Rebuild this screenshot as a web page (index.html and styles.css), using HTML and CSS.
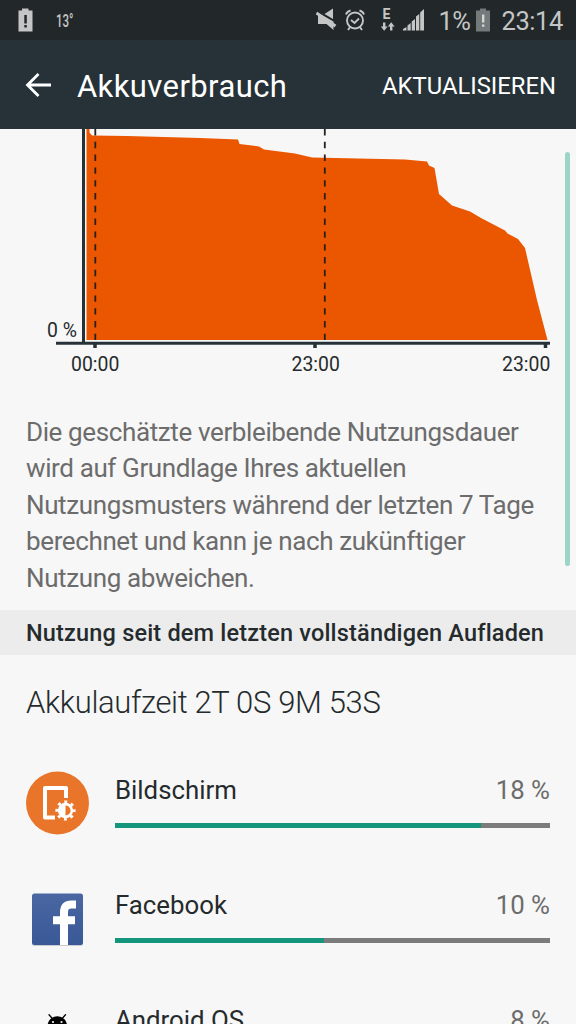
FILE: index.html
```html
<!DOCTYPE html>
<html lang="de">
<head>
    <title>Akkuverbrauch</title>
    <meta charset="utf-8"/>
    <link rel="stylesheet" href="styles.css">
</head>
<body>
    <div class="statusbar">
        <svg class="battery-low" width="16" height="24" viewBox="0 0 16 24">
            <path fill="#c4c6c6" d="M.5 2.500h3.500V.5h6.500v2H14.500V23.500H.5z"/>
            <path fill="#222829" d="M6.300 7h2.500v8.500h-2.500zM6.300 17h2.500v2.500h-2.500z"/>
        </svg>
        <span class="temp">13°</span>
        <svg class="status-icons" width="112" height="26" viewBox="314 7 112 26">
            <!-- muted speaker -->
            <path fill="#c4c6c6" d="M318 14.500h3l12.500 7v8.500l-7-6h-8.500z M324.500 14 333 8.500v10.500z"/>
            <path stroke="#c4c6c6" stroke-width="2.800" d="M316.500 13 335.500 26"/>
            <!-- alarm clock -->
            <g fill="none" stroke="#c4c6c6" stroke-width="1.900">
                <circle cx="355" cy="20.500" r="8"/>
                <path d="M346 14.500q1-3 4.500-4M364 14.500q-1-3-4.500-4M350.500 26.500l-2.500 3.500M359.500 26.500l2.500 3.500M351 20l3.500 3 4.500-4.500"/>
            </g>
            <!-- edge network with up and down arrows -->
            <text class="edge" x="382.500" y="19">E</text>
            <path fill="#c4c6c6" d="M383 22.500h2.400v4h2.200l-3.400 4.300-3.400-4.300h2.200zM390 30.500h2.400v-4h2.200l-3.400-4.300-3.400 4.300h2.200z"/>
            <!-- signal -->
            <path fill="#c4c6c6" d="M403 30.500v-1.500l3.500-2v3.500zM407.500 30.500v-5l3.200-2.500v7.500zM411.700 30.500V21.500l3.300-2.500v11.500zM416 30.500V16.500l3.300-2.500v16.500zM420.200 30.500V12.500l3.800-3.500v21.500z"/>
        </svg>
        <span class="percent">1%</span>
        <svg class="battery" width="16" height="24" viewBox="0 0 16 24">
            <path fill="#747979" d="M1 2.500h4V.5h6v2h4V23.500H1z"/>
            <path fill="#d5d7d7" d="M7 6.500h2.400v8H7zM7 16.500h2.400v2.200H7z"/>
        </svg>
        <span class="clock">23:14</span>
    </div>
    <div class="appbar">
        <svg class="back" width="28" height="26" viewBox="0 0 28 26">
            <path fill="none" stroke="#fff" stroke-width="2.800" d="M27 13H3.500M14.500 2 3.500 13l11 11"/>
        </svg>
        <h1>Akkuverbrauch</h1>
        <span class="refresh">AKTUALISIEREN</span>
    </div>
    <div class="content">
        <svg class="chart" width="576" height="253" viewBox="0 129 576 253">
            <path fill="#eb5600" d="M86.500 340V129H89.500V132.500L92 135.500 127 136 200 138 238 139.500 239.500 144 259 146.500 264 149.500 295 153.500 312 157.500 405 159.500 427 161.500 429 165.500 434.500 168 439 194 452 205.500 470 211.500 481 218 505 230.500 507.500 233.500 518 239 525 248 537 300 547.500 340z"/>
            <g stroke="#263238">
                <path stroke-width="3" d="M83.500 129V343"/>
                <path stroke-width="3" d="M56 343.300H550"/>
                <path stroke-width="3.500" d="M95 344v4M315 344v4M545.500 344v4"/>
            </g>
            <path stroke="#28201d" stroke-width="1.800" stroke-dasharray="6.400 6.400" d="M95.300 129V340M324.800 129V340"/>
            <g class="labels">
                <text x="47" y="337">0 %</text>
                <text x="71" y="370.500">00:00</text>
                <text x="291.500" y="370.500">23:00</text>
                <text x="502" y="370.500">23:00</text>
            </g>
        </svg>
        <p class="note">Die geschätzte verbleibende Nutzungsdauer<br>wird auf Grundlage Ihres aktuellen<br>Nutzungsmusters während der letzten 7 Tage<br>berechnet und kann je nach zukünftiger<br>Nutzung abweichen.</p>
        <h2>Nutzung seit dem letzten vollständigen Aufladen</h2>
        <p class="runtime">Akkulaufzeit 2T 0S 9M 53S</p>
        <div class="app">
            <svg class="app-icon" width="64" height="64" viewBox="0 0 64 64">
                <circle cx="32.500" cy="32" r="31.500" fill="#e87529"/>
                <path fill="none" stroke="#fff" stroke-width="4" stroke-linejoin="round" d="M41 27V17H20V46.500H30"/>
                <circle cx="40.500" cy="39.500" r="8.800" fill="none" stroke="#fff" stroke-width="2.600" stroke-dasharray="3 3.911" stroke-dashoffset="1.500"/>
                <circle cx="40.500" cy="39.500" r="6.400" fill="none" stroke="#fff" stroke-width="2.600"/>
                <path fill="#fff" d="M40.500 33.500a6 6 0 0 0 0 12z"/>
            </svg>
            <div class="usage">
                <div class="row"><span>Bildschirm</span><span class="value">18 %</span></div>
                <div class="bar"><div class="fill" style="width: 84.100%"></div></div>
            </div>
        </div>
        <div class="app">
            <svg class="app-icon" width="64" height="64" viewBox="0 0 64 64">
                <defs>
                    <linearGradient id="blue" x2="0" y2="1">
                        <stop offset="0" stop-color="#4a67a3"/>
                        <stop offset="1" stop-color="#395896"/>
                    </linearGradient>
                </defs>
                <rect x="7" y="8.500" width="51" height="51.500" rx="2.500" fill="#c9ccd2"/>
                <rect x="7" y="7.500" width="51" height="51.500" rx="2.500" fill="url(#blue)"/>
                <path fill="none" stroke="#fff" stroke-width="8" d="M39 59V26.500Q39 18.500 46.500 18.500H51M28 34.200H50"/>
            </svg>
            <div class="usage">
                <div class="row"><span>Facebook</span><span class="value">10 %</span></div>
                <div class="bar"><div class="fill" style="width: 48.100%"></div></div>
            </div>
        </div>
        <div class="app">
            <svg class="app-icon" width="64" height="64" viewBox="0 0 64 64">
                <path d="M22.500 25a9.800 9.800 0 0 1 19.600 0V27.500H22.500z"/>
                <path stroke="#000" stroke-width="1.300" stroke-linecap="round" d="M24 13.700l3.500 4M40.500 13.700l-3.500 4"/>
                <circle cx="28" cy="21" r="1.100" fill="#f7f7f7"/>
                <circle cx="36.500" cy="21" r="1.100" fill="#f7f7f7"/>
            </svg>
            <div class="usage">
                <div class="row"><span>Android OS</span><span class="value">8 %</span></div>
                <div class="bar"><div class="fill" style="width: 38%"></div></div>
            </div>
        </div>
        <div class="scrollbar"></div>
    </div>
</body>
</html>
```

FILE: styles.css
```css
body {
    margin: 0;
    height: 1024px;
    overflow: hidden;
    background-color: #f7f7f7;
    color: #252b2d;
    font-family: Roboto, "Liberation Sans", sans-serif;
}

h1, h2, p {
    margin: 0;
    font-weight: normal;
    white-space: nowrap;
}

svg {
    display: block;
    flex: none;
}

.statusbar {
    display: flex;
    align-items: center;
    box-sizing: border-box;
    height: 40px;
    padding: 0 13px 0 18px;
    background-color: #222829;
    color: #c4c6c6;
}

.temp {
    margin-left: 22px;
    font-size: 18px;
    font-weight: 500;
    transform: scaleX(0.64);
    transform-origin: left;
}

.status-icons {
    margin-left: auto;
}

.edge {
    fill: #c4c6c6;
    font-size: 14px;
    font-weight: bold;
}

.percent {
    margin: 2px 0 0 12px;
    font-size: 25.5px;
    letter-spacing: -0.5px;
}

.battery {
    margin: 0 10px 0 5px;
}

.clock {
    margin-top: 2px;
    font-size: 25.5px;
    letter-spacing: -0.4px;
}

.appbar {
    display: flex;
    align-items: center;
    box-sizing: border-box;
    height: 89px;
    padding: 1px 20px 0 24px;
    background-color: #263238;
    color: #ffffff;
}

.appbar h1 {
    margin: 2px 0 0 25px;
    font-size: 31px;
    letter-spacing: 0.4px;
}

.refresh {
    margin: 2px 0 0 auto;
    font-size: 23.8px;
}

.content {
    position: relative;
    height: 895px;
    overflow: hidden;
}

.labels {
    fill: #252b2d;
    font-size: 19.4px;
}

.note {
    padding: 32px 26px 14px;
    color: #6c6c6c;
    font-size: 26px;
    letter-spacing: -0.38px;
    line-height: 36.4px;
}

h2 {
    height: 45px;
    padding-left: 26px;
    background-color: #ececec;
    font-size: 23.5px;
    font-weight: 500;
    letter-spacing: 0.18px;
    line-height: 47px;
}

.runtime {
    height: 94px;
    padding-left: 26px;
    font-size: 31px;
    font-weight: 300;
    letter-spacing: -0.35px;
    line-height: 96px;
}

.app {
    display: flex;
    height: 115px;
    padding: 0 26px 0 25px;
}

.app-icon {
    margin-top: 22px;
}

.usage {
    flex: 1;
    margin-left: 26px;
    padding-top: 25px;
}

.row {
    display: flex;
    justify-content: space-between;
    font-size: 25.8px;
    line-height: 32px;
}

.value {
    color: #6c6c6c;
}

.bar {
    height: 5px;
    margin-top: 17px;
    background-color: #7c7c7c;
}

.fill {
    height: 5px;
    background-color: #14967d;
}

.scrollbar {
    position: absolute;
    top: 23px;
    right: 6px;
    width: 5px;
    height: 414px;
    border-radius: 3px;
    background-color: #9dd4c8;
}
```
